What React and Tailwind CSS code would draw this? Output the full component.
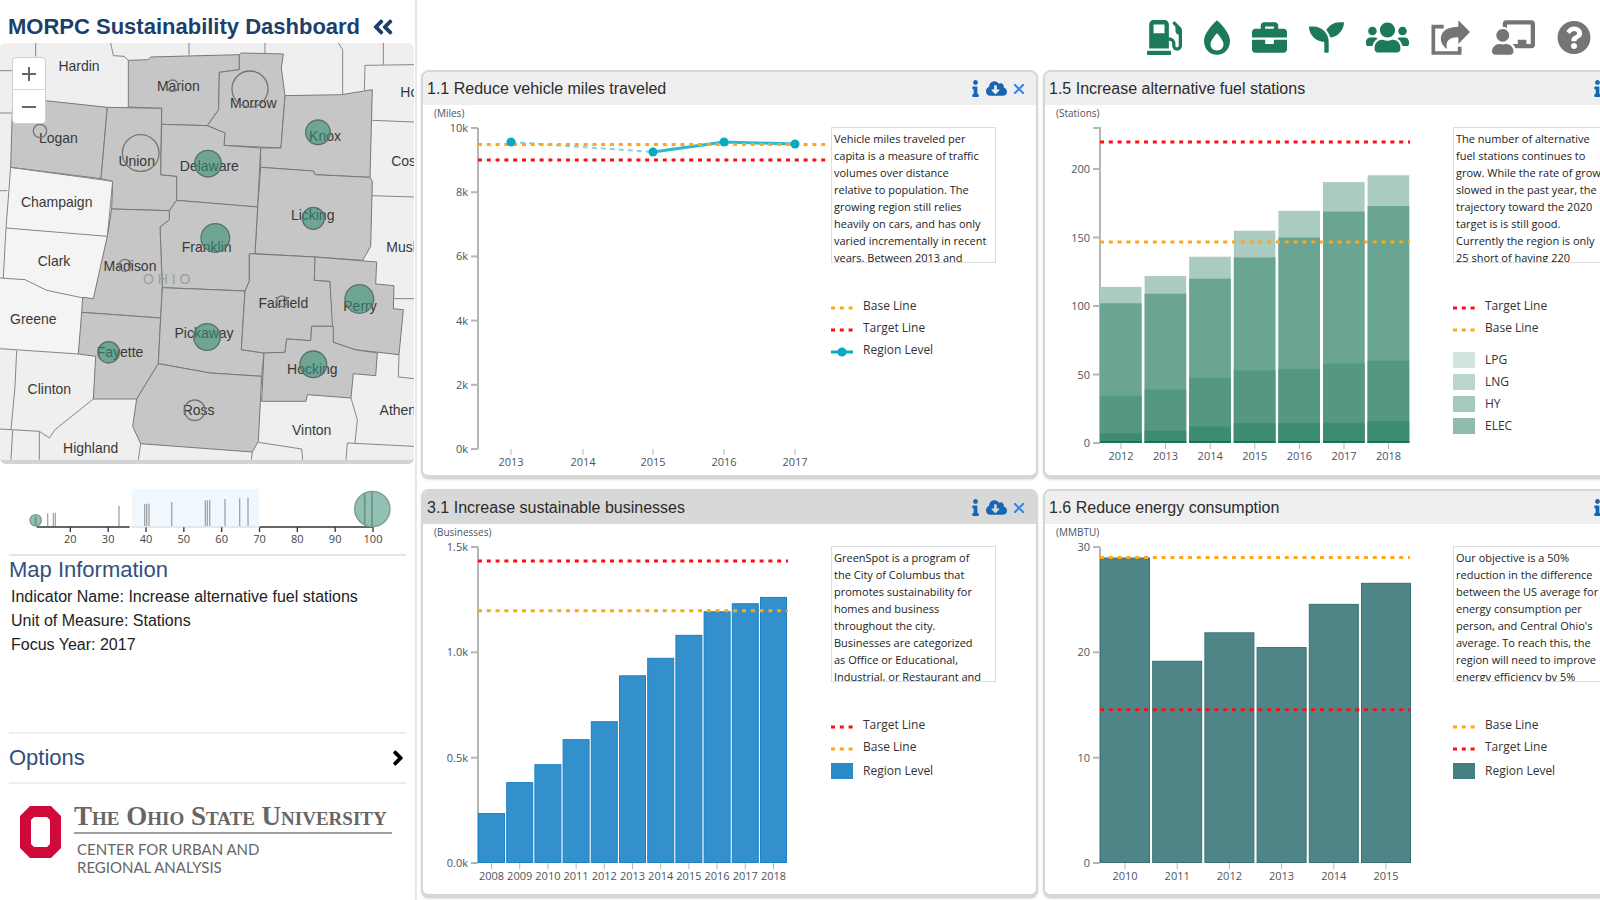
import {
  FaAngleDoubleLeft,
  FaAngleRight,
  FaBriefcase,
  FaBurn,
  FaChalkboardTeacher,
  FaCloudDownloadAlt,
  FaGasPump,
  FaInfo,
  FaQuestionCircle,
  FaSeedling,
  FaUsers,
} from 'react-icons/fa';

const RED = '#fb0f17';
const ORANGE = '#fda81a';
const TEAL = '#0aa9bd';
const DASH = '4 4.8';

// MORPC member counties, drawn darker than the rest of the base map
const COUNTIES = [
  { name: 'Marion', x: 535, y: 260, points: '385,182 445,180 452,172 718,165 718,210 658,218 656,330 622,378 485,374 485,326 385,322' },
  { name: 'Morrow', x: 760, y: 310, points: '718,165 724,160 850,163 844,205 855,288 843,445 672,437 675,400 622,378 656,330 658,218 718,210' },
  { name: 'Logan', x: 175, y: 415, points: '38,303 135,303 322,323 303,537 32,503' },
  { name: 'Union', x: 410, y: 483, points: '322,323 485,326 482,525 530,530 530,602 508,633 335,628 338,545 303,537' },
  { name: 'Delaware', x: 628, y: 498, points: '485,374 622,378 675,400 672,437 782,445 773,622 530,602 530,530 482,525' },
  { name: 'Knox', x: 975, y: 408, points: '855,288 1025,285 1117,270 1110,533 945,525 940,514 782,503 782,445 843,445' },
  { name: 'Licking', x: 938, y: 647, points: '782,503 940,514 945,525 1110,533 1117,545 1112,740 1088,782 945,772 765,762 773,622' },
  { name: 'Franklin', x: 620, y: 742, points: '530,602 773,622 765,762 748,765 748,845 735,874 487,864 480,682 508,660 508,633' },
  { name: 'Madison', x: 390, y: 798, points: '335,628 508,633 508,660 480,682 487,864 482,955 245,938 248,893 280,897 322,710' },
  { name: 'Fayette', x: 360, y: 1058, points: '245,938 482,955 475,1092 410,1198 280,1198 287,1070 235,1063' },
  { name: 'Pickaway', x: 612, y: 1000, points: '487,864 735,874 724,1050 792,1060 785,1130 630,1120 475,1092 482,955' },
  { name: 'Fairfield', x: 850, y: 910, points: '748,762 945,772 943,842 990,845 1000,980 935,980 932,1023 860,1018 855,1058 792,1060 724,1050 735,874 748,845' },
  { name: 'Perry', x: 1080, y: 920, points: '945,772 1130,787 1127,853 1182,858 1180,927 1210,930 1197,1065 1065,1050 1000,1028 990,845 943,842' },
  { name: 'Hocking', x: 937, y: 1107, points: '935,980 1000,980 1000,1028 1065,1050 1132,1060 1127,1128 1060,1122 1053,1195 922,1185 918,1205 785,1205 792,1060 855,1058 860,1018 932,1023' },
  { name: 'Ross', x: 596, y: 1232, points: '475,1092 630,1120 785,1130 775,1325 757,1357 422,1332 398,1280 410,1198' },
];

const NEIGHBORS = [
  { name: 'Hardin', x: 237, y: 200 },
  { name: 'Champaign', x: 170, y: 607 },
  { name: 'Clark', x: 162, y: 783 },
  { name: 'Greene', x: 100, y: 957 },
  { name: 'Clinton', x: 148, y: 1167 },
  { name: 'Highland', x: 272, y: 1346 },
  { name: 'Vinton', x: 935, y: 1292 },
  { name: 'Athens', x: 1204, y: 1230 },
  { name: 'Muskingum', x: 1266, y: 743 },
  { name: 'Coshocton', x: 1274, y: 483 },
  { name: 'Holmes', x: 1272, y: 278 },
];

const BORDERS = [
  'M107 130V170', 'M0 213H35', 'M0 340H35', 'M0 573H22',
  'M332 130L340 168L372 170L385 182', 'M567 130V168', 'M795 130V160',
  'M1015 130L1028 150V285', 'M1150 130V195', 'M1242 195L1095 197L1093 272',
  'M1117 362L1242 367', 'M1115 588L1242 592', 'M1182 897H1242',
  'M32 503L18 685L10 835', 'M0 835L75 840L140 872L250 895', 'M18 685L322 710',
  'M0 1047L235 1063', 'M50 1053L45 1160L33 1290', 'M0 1288L118 1295L148 1315L165 1290L280 1198',
  'M38 1292L33 1380', 'M118 1295V1380', 'M422 1332L415 1380',
  'M775 1328L905 1348L908 1380', 'M757 1357L754 1380',
  'M1053 1195L1072 1260L1065 1330', 'M1242 1340L1042 1330L1038 1380',
  'M1197 1065L1195 1132L1242 1137',
];

const OPEN_CIRCLES = [
  [518, 258, 17], [750, 268, 54], [120, 394, 20], [422, 460, 55], [375, 797, 18], [846, 905, 16], [584, 1232, 31],
];

const FILLED_CIRCLES = [
  [954, 398, 37], [624, 492, 40], [940, 656, 33], [646, 715, 43], [1078, 898, 43], [621, 1012, 40], [326, 1058, 32], [940, 1094, 40],
];

function CountyMap() {
  return (
    <div className="relative mr-px overflow-hidden rounded-md border-b-4 border-[#d2d2d2]">
      <svg viewBox="0 130 1242 1250" className="block h-auto w-full bg-[#efefef]" role="img" aria-label="County map">
        <g fill="#f4f4f4" stroke="none">
          <path d="M32 503L338 545L322 710L280 897L140 872L75 840L10 835L18 685Z" />
          <path d="M0 835L75 840L140 872L250 895L235 1063L0 1047Z" />
        </g>
        <g fill="#c6c6c6" stroke="#777" strokeWidth="3" strokeLinejoin="round">
          {COUNTIES.map((c) => <polygon key={c.name} points={c.points} />)}
        </g>
        <g fill="none" stroke="#858585" strokeWidth="3">
          {BORDERS.map((d) => <path key={d} d={d} />)}
          <path d="M32 503L338 545L322 710" />
        </g>
        <g fontSize="42" fill="#383838" textAnchor="middle">
          {[...COUNTIES, ...NEIGHBORS].map((c) => (
            <text key={c.name} x={c.x} y={c.y + 15}>{c.name}</text>
          ))}
        </g>
        <text fontSize="42" fill="#9d9d9d" textAnchor="middle" x="500" y="853">O H I O</text>
        <g fill="#358f75" fillOpacity="0.6" stroke="#5b6f6a" strokeWidth="4">
          {FILLED_CIRCLES.map(([x, y, r]) => <circle key={`${x}-${y}`} cx={x} cy={y} r={r} />)}
        </g>
        <g fill="none" stroke="#757575" strokeWidth="4">
          {OPEN_CIRCLES.map(([x, y, r]) => <circle key={`${x}-${y}`} cx={x} cy={y} r={r} />)}
        </g>
      </svg>
      <div className="absolute left-3 top-[14px] flex w-[34px] flex-col overflow-hidden rounded border border-[#cfcfcf] bg-white">
        <button aria-label="Zoom in" className="flex h-8 items-center justify-center border-b border-[#d8d8d8]">
          <svg viewBox="0 0 14 14" className="size-[14px]" stroke="#666" strokeWidth="2"><path d="M0 7H14M7 0V14" /></svg>
        </button>
        <button aria-label="Zoom out" className="flex h-[33px] items-center justify-center">
          <svg viewBox="0 0 14 14" className="size-[14px]" stroke="#666" strokeWidth="2"><path d="M0 7H14" /></svg>
        </button>
      </div>
    </div>
  );
}

// Value distribution of the focus indicator: [x, top of mark]
const MARKS = [
  [143, 130], [160, 128], [166, 128], [357, 108], [434, 102], [440, 101], [447, 101], [515, 96],
  [616, 91], [622, 91], [629, 90], [675, 87], [719, 85], [744, 83],
];

function RangeSlider() {
  return (
    <svg viewBox="0 0 1242 240" className="mr-px mt-[6px] block h-auto" role="img" aria-label="Value range">
      <rect x="395" y="57" width="382" height="112" fill="#f0f7fd" />
      <g stroke="#a2a6a8" strokeWidth="4">
        {MARKS.map(([x, y]) => <path key={x} d={`M${x} ${y}V168`} />)}
      </g>
      <path d="M395 171H777" stroke="#ccd0d2" strokeWidth="3" />
      <path d="M110 171H389M779 171H1119" stroke="#333" strokeWidth="4" />
      <g fill="#92c1b3" stroke="#7c9a92" strokeWidth="4">
        <circle cx="107" cy="151" r="17" />
        <circle cx="1117" cy="117" r="53" />
      </g>
      <path d="M1094 70V164M1116 66V168M107 140V164" stroke="#6d8f86" strokeWidth="5" />
      <g fontSize="33" fill="#444" textAnchor="middle" className="font-['Open_Sans',sans-serif]">
        {[20, 30, 40, 50, 60, 70, 80, 90, 100].map((v, i) => (
          <g key={v}>
            <path d={`M${211 + i * 113.5} 172v14`} stroke="#333" strokeWidth="4" />
            <text x={211 + i * 113.5} y="220">{v}</text>
          </g>
        ))}
      </g>
    </svg>
  );
}

function Sidebar() {
  return (
    <aside className="flex w-[417px] shrink-0 flex-col border-r-2 border-[#e9e9e9]">
      <div className="flex h-[43px] items-center justify-between pl-2 pr-5 pt-[10px]">
        <h1 className="whitespace-nowrap text-[22px] font-bold leading-7 text-[#1c3f6b]">MORPC Sustainability Dashboard</h1>
        <button aria-label="Collapse sidebar" className="text-[#1c3f6b]">
          <FaAngleDoubleLeft className="size-6" />
        </button>
      </div>
      <CountyMap />
      <RangeSlider />
      <section className="mx-[9px] mt-1 min-h-[178px] border-t-2 border-[#e4e4e4] text-[#222]">
        <h2 className="text-[22px] leading-7 text-[#31507c]">Map Information</h2>
        <ul className="pl-[2px] pt-px text-base leading-6">
          <li>Indicator Name: Increase alternative fuel stations</li>
          <li>Unit of Measure: Stations</li>
          <li>Focus Year: 2017</li>
        </ul>
      </section>
      <button className="mx-[9px] flex h-[52px] items-center justify-between border-y-2 border-[#eee] text-[22px] text-[#31507c]">
        Options
        <FaAngleRight className="-mr-1 size-6 text-black" />
      </button>
      <div className="flex gap-[13px] pl-5 pr-[23px] pt-[18px]">
        <svg viewBox="0 0 41 52" className="mt-1 h-[52px] w-[41px] shrink-0" aria-hidden="true">
          <path d="M10 0H31L41 10V42L31 52H10L0 42V10ZM14 11L11 14V38L14 41H27L30 38V14L27 11Z" fill="#cf0a3a" fillRule="evenodd" />
        </svg>
        <div className="grow text-[#666]">
          <p className="whitespace-nowrap border-b-2 border-[#a0a0a0] pb-[2px] font-['Liberation_Serif',serif] text-[27px] font-bold leading-7 [font-variant:small-caps]">
            The Ohio State University
          </p>
          <p className="pl-[3px] pt-[6px] font-[Lato,sans-serif] text-[15px] leading-[18px]">
            CENTER FOR URBAN AND<br />REGIONAL ANALYSIS
          </p>
        </div>
      </div>
    </aside>
  );
}

function ShareIcon({ className }) {
  return (
    <svg viewBox="0 0 117 105" className={className} fill="currentColor">
      <path d="M38 20H7V99H86V80" fill="none" stroke="currentColor" strokeWidth="11" />
      <path d="M82 1L117 36L82 72V52C58 52 42 60 48 87C18 66 22 20 82 20Z" />
    </svg>
  );
}

const TOOLS = [
  { label: 'Transportation', Icon: FaGasPump, color: 'text-[#1c7a5b]', width: 'w-[35px]' },
  { label: 'Energy', Icon: FaBurn, color: 'text-[#1c7a5b]', width: 'w-[26px]' },
  { label: 'Economy', Icon: FaBriefcase, color: 'text-[#1c7a5b]', width: 'w-[35px]' },
  { label: 'Environment', Icon: FaSeedling, color: 'text-[#1c7a5b]', width: 'w-[35px]' },
  { label: 'Community', Icon: FaUsers, color: 'text-[#1c7a5b]', width: 'w-[43px]' },
  { label: 'Share', Icon: ShareIcon, color: 'text-[#757575]', width: 'w-[39px]' },
  { label: 'Tutorial', Icon: FaChalkboardTeacher, color: 'text-[#757575]', width: 'w-[43px]' },
  { label: 'Help', Icon: FaQuestionCircle, color: 'text-[#757575]', width: 'w-[34px]' },
];

function Toolbar() {
  return (
    <nav className="flex h-[70px] items-center justify-end gap-[22px] pr-[9px] pt-[5px]">
      {TOOLS.map(({ label, Icon, color, width }) => (
        <button key={label} aria-label={label} className={color}>
          <Icon className={`h-[35px] ${width}`} />
        </button>
      ))}
    </nav>
  );
}

const AXIS_X = 55;
const AXIS_TOP = 23;

function Axes({ unit, bottom, max, ticks, xTicks, capped }) {
  const y = (v) => bottom - (v / max) * (bottom - AXIS_TOP);
  return (
    <g fontSize="11" fill="#4a5560">
      <text x="11" y="12" fontSize="10">({unit})</text>
      <path d={`M${capped ? 48 : AXIS_X} ${AXIS_TOP}H${AXIS_X}V${bottom}`} fill="none" stroke="#b5b5b5" strokeWidth="2" />
      {ticks.map(([v, label]) => (
        <g key={label}>
          <path d={`M48 ${y(v)}H55`} stroke="#b5b5b5" strokeWidth="2" />
          <text x="45" y={y(v) + 4} textAnchor="end">{label}</text>
        </g>
      ))}
      {xTicks.map(([x, label]) => (
        <g key={label}>
          <path d={`M${x} ${bottom}v6`} stroke="#b5b5b5" strokeWidth="1" />
          <text x={x} y={bottom + 17} textAnchor="middle">{label}</text>
        </g>
      ))}
    </g>
  );
}

function DottedLine({ y, color, end = 365 }) {
  return <path d={`M55 ${y}H${end}`} stroke={color} strokeWidth="3" strokeDasharray={DASH} />;
}

function Plot({ label, children }) {
  return (
    <svg viewBox="0 0 408 366" className="block h-[366px] w-[408px] shrink-0 font-['Open_Sans',sans-serif]" role="img" aria-label={label}>
      {children}
    </svg>
  );
}

function MilesChart() {
  const xTicks = [[88, '2013'], [160, '2014'], [230, '2015'], [301, '2016'], [372, '2017']];
  return (
    <Plot label="Vehicle miles traveled">
      <Axes
        unit="Miles"
        bottom={344}
        max={10}
        ticks={[[0, '0k'], [2, '2k'], [4, '4k'], [6, '6k'], [8, '8k'], [10, '10k']]}
        xTicks={xTicks}
      />
      <path d="M88 37L230 47" stroke="#7fd6e0" strokeWidth="2" strokeDasharray="5 4" />
      <path d="M230 47L301 37L372 39" fill="none" stroke="#2cb9ca" strokeWidth="3" />
      <DottedLine y={39.5} color={ORANGE} end={405} />
      <DottedLine y={55} color={RED} end={405} />
      {[[88, 37], [230, 47], [301, 37], [372, 39]].map(([x, y]) => <circle key={x} cx={x} cy={y} r="4.5" fill={TEAL} />)}
    </Plot>
  );
}

// Upper edge of each stacked band, top band first
const STATIONS = [
  ['2012', [114, 102, 34.5, 7]],
  ['2013', [122, 109, 39, 9]],
  ['2014', [136, 120, 47.5, 12]],
  ['2015', [155, 135.5, 53, 14.5]],
  ['2016', [169.5, 150, 54, 14.5]],
  ['2017', [190.5, 169, 58, 14.5]],
  ['2018', [195.5, 173, 60, 16]],
];
const BAND_COLORS = ['#aacbc1', '#6aa594', '#549882', '#3d8b72'];

function StationsChart() {
  const bottom = 338;
  const scale = 315 / 230;
  const left = (i) => AXIS_X + i * 44.6;
  return (
    <Plot label="Alternative fuel stations">
      <Axes
        unit="Stations"
        bottom={bottom}
        max={230}
        ticks={[[0, '0'], [50, '50'], [100, '100'], [150, '150'], [200, '200']]}
        xTicks={STATIONS.map(([year], i) => [left(i) + 21, year])}
        capped
      />
      {STATIONS.map(([year, bands], i) => (
        <g key={year}>
          {bands.map((v, b) => (
            <rect key={b} x={left(i)} y={bottom - v * scale} width="41.6" height={v * scale} fill={BAND_COLORS[b]} />
          ))}
          <rect x={left(i)} y={bottom - 2} width="41.6" height="2" fill="#187457" />
        </g>
      ))}
      <DottedLine y={37} color={RED} />
      <DottedLine y={137} color={ORANGE} />
    </Plot>
  );
}

function BarChart({ label, unit, data, max, ticks, pitch, width, fill, stroke, target, base }) {
  const bottom = 339;
  const scale = (bottom - AXIS_TOP) / max;
  return (
    <Plot label={label}>
      <Axes
        unit={unit}
        bottom={bottom}
        max={max}
        ticks={ticks}
        xTicks={data.map(([year], i) => [AXIS_X + i * pitch + width / 2, year])}
      />
      {data.map(([year, v], i) => (
        <rect
          key={year}
          x={AXIS_X + 0.5 + i * pitch}
          y={bottom - v * scale + 0.5}
          width={width - 1}
          height={v * scale - 1}
          fill={fill}
          stroke={stroke}
        />
      ))}
      <DottedLine y={bottom - target * scale} color={RED} />
      <DottedLine y={bottom - base * scale} color={ORANGE} />
    </Plot>
  );
}

const BUSINESSES = [
  ['2008', 0.237], ['2009', 0.384], ['2010', 0.469], ['2011', 0.588], ['2012', 0.673], ['2013', 0.891],
  ['2014', 0.974], ['2015', 1.083], ['2016', 1.195], ['2017', 1.233], ['2018', 1.263],
];

const ENERGY = [['2010', 29], ['2011', 19.2], ['2012', 21.9], ['2013', 20.5], ['2014', 24.6], ['2015', 26.6]];

function Legend({ lines, swatches = [], gap = '' }) {
  return (
    <div className="mt-8 text-xs text-[#333]">
      <ul>
        {lines.map(([label, color, dot]) => (
          <li key={label} className="flex h-[22px] items-center gap-[10px]">
            <svg viewBox="0 0 22 10" className="mt-1 h-[10px] w-[22px]">
              <path d="M0 5H22" stroke={color} strokeWidth="3" strokeDasharray={dot ? undefined : DASH} />
              {dot && <circle cx="11" cy="5" r="4.5" fill={color} />}
            </svg>
            {label}
          </li>
        ))}
      </ul>
      <ul className={gap}>
        {swatches.map(([label, color]) => (
          <li key={label} className="flex h-[22px] items-center gap-[10px]">
            <span className={`h-4 w-[22px] ${color}`} />
            {label}
          </li>
        ))}
      </ul>
    </div>
  );
}

function Card({ title, active, chart, text, legend }) {
  return (
    <article className="h-[409px] overflow-hidden rounded-lg border-2 border-b-4 border-[#d6d6d6] bg-white shadow-sm">
      <header className={`flex h-[33px] items-center justify-between pl-1 pr-3 ${active ? 'bg-[#d8d8d8]' : 'bg-[#efefef]'}`}>
        <h2 className="text-base text-[#2b2b2b]">{title}</h2>
        <div className="flex items-center gap-[7px] text-[#1766b3]">
          <button aria-label="Info"><FaInfo className="h-[17px] w-[7px]" /></button>
          <button aria-label="Download"><FaCloudDownloadAlt className="h-[17px] w-[21px]" /></button>
          <button aria-label="Close">
            <svg viewBox="0 0 10 10" className="size-[10px]" stroke="#3386e8" strokeWidth="2"><path d="M0 0L10 10M10 0L0 10" /></svg>
          </button>
        </div>
      </header>
      <div className="flex">
        {chart}
        <div className="w-[165px] shrink-0 pt-[22px] font-['Open_Sans',sans-serif]">
          <p className="h-[136px] overflow-hidden border border-[#ddd] pl-[2px] pt-[2px] text-[11px] leading-[17px] text-[#222]">
            {text.map((line) => <span key={line} className="block whitespace-nowrap">{line}</span>)}
          </p>
          {legend}
        </div>
      </div>
    </article>
  );
}

export default function App() {
  return (
    <div className="flex min-h-screen overflow-hidden bg-white font-['Liberation_Sans',Arial,sans-serif]">
      <Sidebar />
      <main className="min-w-0 flex-1 overflow-hidden pl-1">
        <Toolbar />
        <div className="grid min-w-[1239px] grid-cols-2 gap-x-[5px] gap-y-[10px]">
          <Card
            title="1.1 Reduce vehicle miles traveled"
            chart={<MilesChart />}
            text={[
              'Vehicle miles traveled per', 'capita is a measure of traffic', 'volumes over distance',
              'relative to population. The', 'growing region still relies', 'heavily on cars, and has only',
              'varied incrementally in recent', 'years. Between 2013 and',
            ]}
            legend={<Legend lines={[['Base Line', ORANGE], ['Target Line', RED], ['Region Level', TEAL, true]]} />}
          />
          <Card
            title="1.5 Increase alternative fuel stations"
            chart={<StationsChart />}
            text={[
              'The number of alternative', 'fuel stations continues to', 'grow. While the rate of growth',
              'slowed in the past year, the', 'trajectory toward the 2020', 'target is is still good.',
              'Currently the region is only', '25 short of having 220',
            ]}
            legend={(
              <Legend
                lines={[['Target Line', RED], ['Base Line', ORANGE]]}
                gap="pt-[10px]"
                swatches={[['LPG', 'bg-[#d0e3dc]'], ['LNG', 'bg-[#bad5cd]'], ['HY', 'bg-[#a6cabf]'], ['ELEC', 'bg-[#8fbcae]']]}
              />
            )}
          />
          <Card
            title="3.1 Increase sustainable businesses"
            active
            chart={(
              <BarChart
                label="Sustainable businesses"
                unit="Businesses"
                data={BUSINESSES}
                max={1.5}
                ticks={[[0, '0.0k'], [0.5, '0.5k'], [1, '1.0k'], [1.5, '1.5k']]}
                pitch={28.2}
                width={27}
                fill="#3390cc"
                stroke="#1a82c6"
                target={1.434}
                base={1.197}
              />
            )}
            text={[
              'GreenSpot is a program of', 'the City of Columbus that', 'promotes sustainability for',
              'homes and business', 'throughout the city.', 'Businesses are categorized',
              'as Office or Educational,', 'Industrial, or Restaurant and',
            ]}
            legend={(
              <Legend
                lines={[['Target Line', RED], ['Base Line', ORANGE]]}
                gap="pt-[2px]"
                swatches={[['Region Level', 'bg-[#2a8bca]']]}
              />
            )}
          />
          <Card
            title="1.6 Reduce energy consumption"
            chart={(
              <BarChart
                label="Energy consumption"
                unit="MMBTU"
                data={ENERGY}
                max={30}
                ticks={[[0, '0'], [10, '10'], [20, '20'], [30, '30']]}
                pitch={52.2}
                width={50}
                fill="#508588"
                stroke="#347174"
                target={14.55}
                base={29}
              />
            )}
            text={[
              'Our objective is a 50%', 'reduction in the difference', 'between the US average for',
              'energy consumption per', 'person, and Central Ohio\'s', 'average. To reach this, the',
              'region will need to improve', 'energy efficiency by 5%',
            ]}
            legend={(
              <Legend
                lines={[['Base Line', ORANGE], ['Target Line', RED]]}
                gap="pt-[2px]"
                swatches={[['Region Level', 'bg-[#458082]']]}
              />
            )}
          />
        </div>
      </main>
    </div>
  );
}
